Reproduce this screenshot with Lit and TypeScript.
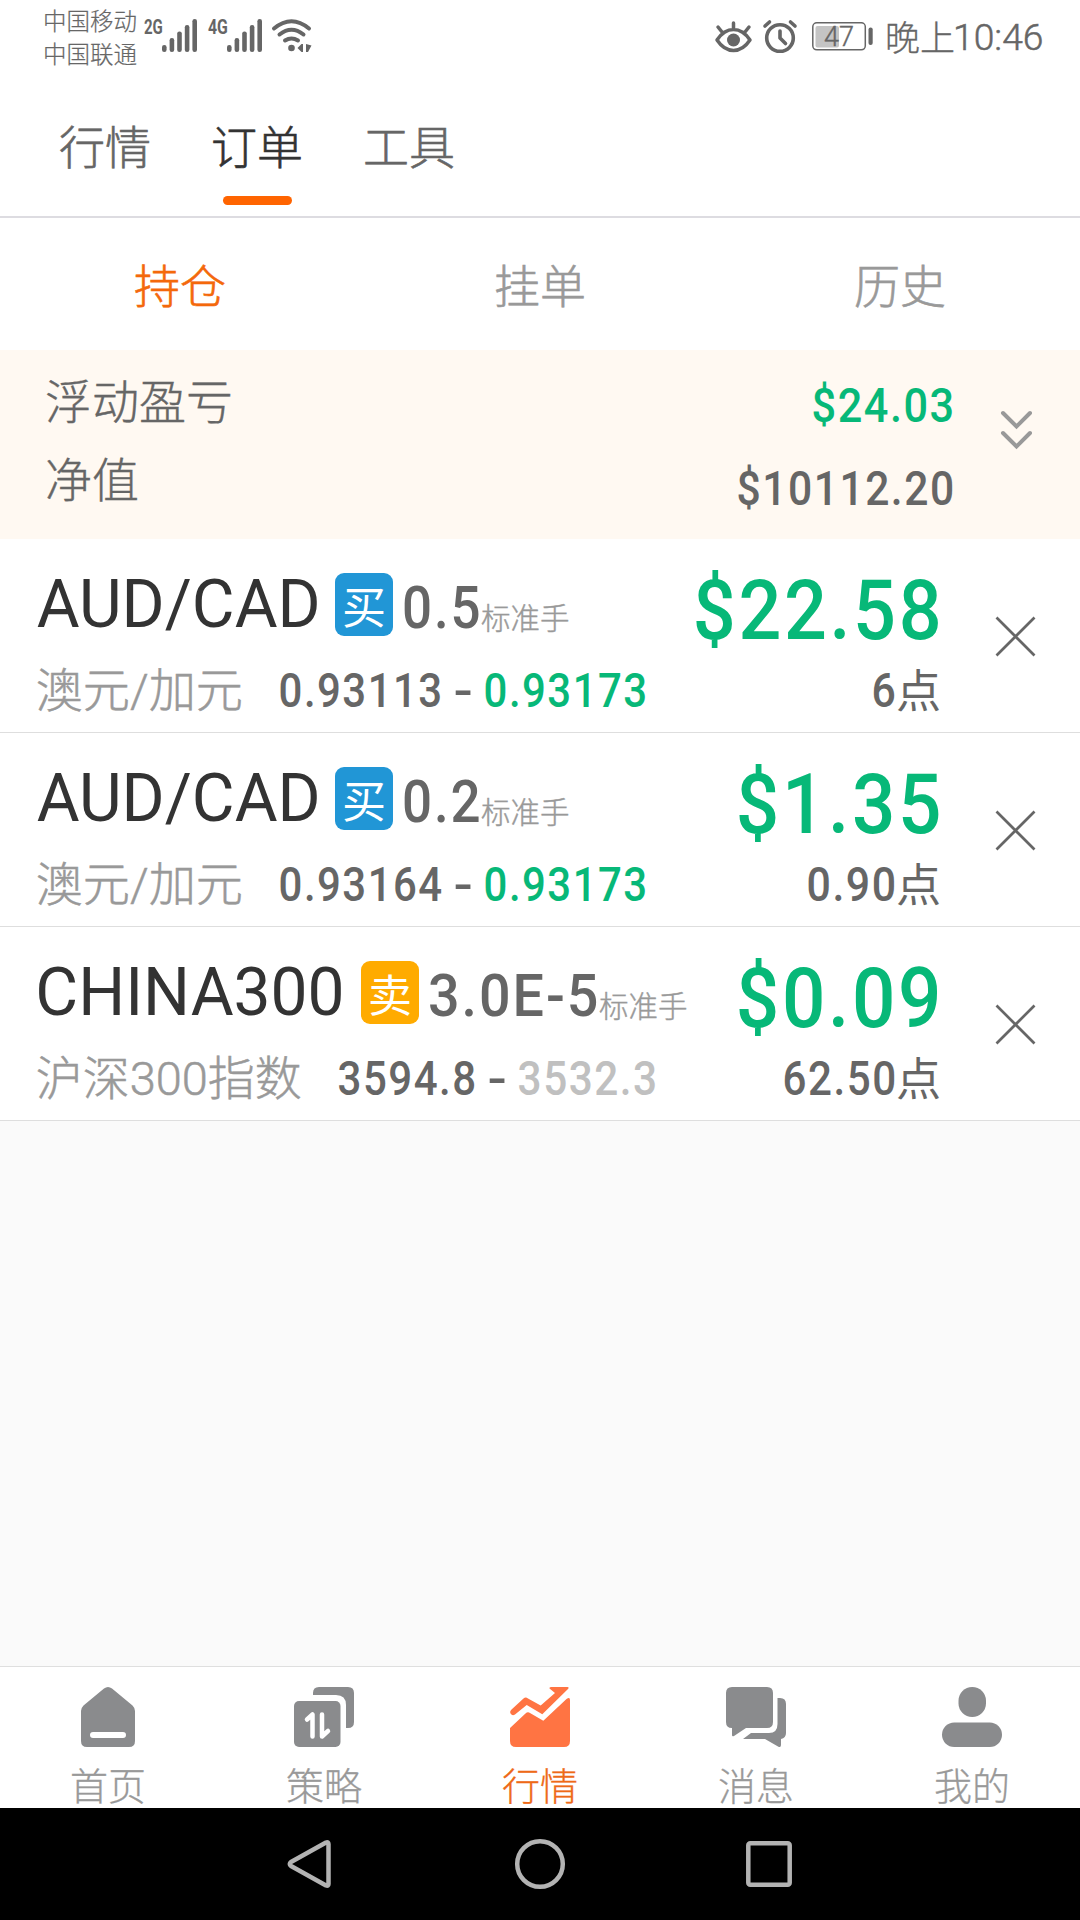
import { LitElement, html, css, svg } from "lit";
import { customElement } from "lit/decorators.js";

/* Condensed numerals: the box is the ink width by the cap height, so rows can align on baselines. */
const fit = (text: string, size: number, width: number, cls: string, left = 0.05) => {
  const cap = Math.round(size * 0.711);
  const condensed = cls.includes("medium") && text.length > 1;
  const tracked = condensed ? 0.035 : 0;
  const k = condensed ? 0.88 : 1;
  return html`<svg class="fit ${cls}" width=${width} height=${cap} viewBox="0 0 ${width} ${cap}">
    <text transform="translate(${-size * left} ${cap}) scale(${k} 1)" font-size=${size} letter-spacing=${size * tracked} textLength=${(width + size * (left + 0.04 + tracked)) / k} lengthAdjust="spacingAndGlyphs">${text}</text>
  </svg>`;
};

interface Order {
  symbol: string; symbolW: number; side: "buy" | "sell"; lots: string; lotsW: number;
  name: string; nameW: number; open: string; openW: number; now: string; nowW: number; nowCls: string;
  profit: string; profitW: number; points: string; pointsW: number;
}

const ORDERS: Order[] = [
  { symbol: "AUD/CAD", symbolW: 280, side: "buy", lots: "0.5", lotsW: 73, name: "澳元/加元", nameW: 203, open: "0.93113", openW: 159, now: "0.93173", nowW: 159, nowCls: "green", profit: "$22.58", profitW: 241, points: "6", pointsW: 20 },
  { symbol: "AUD/CAD", symbolW: 280, side: "buy", lots: "0.2", lotsW: 73, name: "澳元/加元", nameW: 203, open: "0.93164", openW: 159, now: "0.93173", nowW: 159, nowCls: "green", profit: "$1.35", profitW: 198, points: "0.90", pointsW: 85 },
  { symbol: "CHINA300", symbolW: 304, side: "sell", lots: "3.0E-5", lotsW: 165, name: "沪深300指数", nameW: 262, open: "3594.8", openW: 134, now: "3532.3", nowW: 135, nowCls: "pale", profit: "$0.09", profitW: 198, points: "62.50", pointsW: 109 },
];

const signal = svg`
  <rect x="0" y="26" width="4.6" height="7" rx="2.2"/><rect x="7.6" y="19" width="4.6" height="14" rx="2.2"/>
  <rect x="15.2" y="12.4" width="4.6" height="20.6" rx="2.2"/><rect x="22.8" y="6" width="4.6" height="27" rx="2.2"/>
  <rect x="30.4" y="0" width="4.6" height="33" rx="2.2"/>`;

const NAV = [
  { label: "首页", on: false, icon: svg`<path fill-rule="evenodd" d="M26 1.5Q30 -1.5 34 1.5L54.5 18.5Q57 21 57 24V54Q57 60 51 60H9Q3 60 3 54V24Q3 21 5.500 18.500ZM15 45a3 3 0 0 0 0 6H45a3 3 0 0 0 0-6Z"/>` },
  { label: "策略", on: false, icon: svg`<path d="M19 8V6Q19 0 25 0H54Q60 0 60 6V35Q60 41 54 41H52V18Q52 8 42 8Z"/><rect y="14" width="46.500" height="46" rx="5"/><path class="knock" d="M13 32.500L18.500 27.500V49.500M28 27.500V49.500L34 44"/>` },
  { label: "行情", on: true, icon: svg`<path d="M1 23L13.500 11.500Q15.700 9.700 18 11.500L30.700 18.500L45 6L39.500 1.500Q39 0 41 0H57.500Q59.500 .3 58 2L32.300 27.300L16.700 18L5 27.500Q2.500 29 .8 27Q-.8 25 1 23Z"/><path d="M0 41L15.500 26.500Q17.700 24.500 20 26L33.300 33.700L56.500 12Q60 9.500 60 13V54Q60 60 54 60H6Q0 60 0 54Z"/>` },
  { label: "消息", on: false, icon: svg`<path d="M6 0H41Q47 0 47 6V35Q47 41 41 41H20L8 49Q6 50 6 48V41Q0 41 0 35V6Q0 0 6 0Z"/><path d="M51.500 11H54Q60 11 60 17V46Q60 51 55 52V58Q55 61 52 59.500L39 52H17L25 46H43Q51.500 46 51.500 37Z"/>` },
  { label: "我的", on: false, icon: svg`<rect x="16.500" width="27.500" height="30" rx="13.700"/><rect y="35.500" width="60" height="24.500" rx="12.250"/>` },
];

@customElement("app-root")
export class AppRoot extends LitElement {
  static styles = css`
    :host { display: block; font-family: "Noto Sans CJK SC", "Noto Sans CJK TC", sans-serif; font-weight: 300; color: #666; }
    * { box-sizing: border-box; }
    svg { display: block; flex: none; overflow: visible; }
    .fit { font-family: Roboto, "Noto Sans CJK SC", sans-serif; fill: currentColor; }
    .medium { font-weight: 500; }
    .bold { font-weight: 700; }
    .regular { font-weight: 400; }
    .light { font-weight: 300; stroke: currentColor; stroke-width: .5px; }
    .green { color: #07b878; }
    .pale { color: #c0c0c0; }
    .dark { color: #333; }
    .page { display: flex; flex-direction: column; width: 1080px; height: 1920px; background: #fafafa; overflow: hidden; }

    .status { display: flex; height: 74px; background: #fff; padding: 0 38px 0 43px; align-items: flex-start; }
    .carriers { display: flex; flex-direction: column; width: 95px; margin-top: 4px; margin-right: 7px; font-size: 23.5px; line-height: 33px; white-space: nowrap; -webkit-text-stroke: .2px currentColor; }
    .status svg { fill: #666; }
    .gen { margin-top: 19px; }
    .bars { margin-top: 19px; }
    .bars.first { margin-right: 12px; }
    .wifi { margin: 19px 0 0 10px; }
    .spacer { flex: 1; }
    .status .line { fill: none; stroke: #666; stroke-linecap: round; stroke-linejoin: round; }
    .eye { margin-top: 20px; margin-right: 11px; }
    .alarm { margin-top: 20px; margin-right: 15px; }
    .battery { margin-top: 22px; margin-right: 12px; }
    .battery .level { fill: #c4c4c4; }
    .battery .light { stroke: #666; stroke-width: .4px; }
    .clock { display: flex; margin-top: 12px; font-size: 35px; line-height: 48px; -webkit-text-stroke: .3px currentColor; }
    .clock .fit { margin-top: 12px; margin-left: 1px; }

    .tabs { display: flex; height: 144px; background: #fff; border-bottom: 2px solid #dddce1; padding: 0 59px; gap: 60px; font-size: 46px; -webkit-text-stroke: .6px currentColor; }
    .tab { display: flex; flex-direction: column; align-items: center; width: 92px; line-height: 66px; padding-top: 37px; }
    .tab.on { color: #333; }
    .tab.on::after { content: ""; width: 69px; height: 9px; border-radius: 5px; background: #ff6400; margin-top: 19px; }

    .subtabs { display: grid; grid-template-columns: repeat(3, 1fr); height: 132px; background: #fff; font-size: 46px; line-height: 131px; text-align: center; color: #999; -webkit-text-stroke: .6px currentColor; }
    .subtabs .on { color: #f4680b; }

    .summary { display: flex; height: 189px; background: #fff9f2; padding-left: 45px; }
    .labels { display: flex; flex-direction: column; flex: 1; padding-top: 10px; font-size: 47px; line-height: 77.5px; -webkit-text-stroke: .4px currentColor; }
    .values { display: flex; flex-direction: column; align-items: flex-end; gap: 49px; padding-top: 38px; }
    .more { width: 128px; padding: 61px 0 0 49px; }
    .more svg { fill: none; stroke: #999; stroke-width: 4; stroke-linecap: round; }

    .order { display: flex; height: 194px; background: #fff; border-bottom: 1px solid #dedede; padding-left: 38px; }
    .main { display: flex; flex-direction: column; flex: 1; min-width: 0; }
    .head { display: flex; align-items: flex-end; height: 97px; }
    .head .symbol { margin-bottom: 9px; margin-right: 17px; display: flex; }
    .badge { width: 58px; height: 63px; border-radius: 9px; background: #2196d6; color: #fff; font-size: 44px; line-height: 65px; text-align: center; margin-right: 12px; font-weight: 400; flex: none; }
    .badge.sell { background: #ffab00; margin-left: 2px; }
    .lots { margin-bottom: 8px; display: flex; }
    .unit { font-size: 29.5px; line-height: 40px; color: #999; margin-left: 3px; white-space: nowrap; -webkit-text-stroke: .4px currentColor; }
    .quote { display: flex; height: 71px; align-items: flex-end; }
    .name { color: #999; margin-right: 40px; display: flex; }
    .dashbox { margin: 0 15px 0 16px; }
    .gain { display: flex; flex-direction: column; align-items: flex-end; padding-top: 41px; width: 242px; flex: none; }
    .points { display: flex; align-items: flex-end; margin-top: 34px; height: 34px; }
    .points span { font-size: 45px; line-height: 44px; width: 45px; height: 40px; margin-left: 2px; font-weight: 400; margin-right: -3px; }
    .close { width: 142px; padding: 78px 0 0 58px; flex: none; }
    .close svg { stroke: #666; stroke-width: 2.7; }

    .blank { flex: 1; }
    .nav { display: grid; grid-template-columns: repeat(5, 1fr); height: 142px; background: #fff; border-top: 1px solid #dfdfdf; color: #999; font-size: 38px; line-height: 56px; -webkit-text-stroke: .3px currentColor; }
    .item { display: flex; flex-direction: column; align-items: center; padding-top: 20px; gap: 9px; }
    .item svg { fill: #8a8b8d; }
    .item.on { color: #ee6a18; }
    .item.on svg { fill: #ff7443; }
    .item .knock { fill: none; stroke: #fff; stroke-width: 4.5; stroke-linecap: round; stroke-linejoin: round; }
    .system { display: flex; height: 112px; background: #000; justify-content: center; align-items: center; gap: 181px; padding-right: 1px; }
    .system svg { fill: none; stroke: #b3b3b3; stroke-width: 4.5; stroke-linejoin: round; }
    .system .back { margin-right: 3px; }
  `;

  private row(o: Order) {
    return html`<div class="order">
      <div class="main">
        <div class="head">
          <div class="symbol dark">${fit(o.symbol, 66, o.symbolW, "regular", o.side === "buy" ? 0.02 : 0.04)}</div>
          <div class="badge ${o.side}">${o.side === "buy" ? "买" : "卖"}</div>
          <div class="lots">${fit(o.lots, 59, o.lotsW, "medium")}</div>
          <div class="unit">标准手</div>
        </div>
        <div class="quote">
          <div class="name">${fit(o.name, 47, o.nameW, "light")}</div>
          ${fit(o.open, 48, o.openW, "medium")}
          <div class="dashbox">${fit("-", 48, 15, "medium")}</div>
          ${fit(o.now, 48, o.nowW, "medium " + o.nowCls)}
        </div>
      </div>
      <div class="gain">
        ${fit(o.profit, 83, o.profitW, "medium green")}
        <div class="points">${fit(o.points, 48, o.pointsW, "medium")}<span>点</span></div>
      </div>
      <div class="close"><svg width="39" height="39"><path d="M.5 .5L38.500 38.500M38.500 .5L.5 38.500"/></svg></div>
    </div>`;
  }

  render() {
    return html`<div class="page">
      <div class="status">
        <div class="carriers"><span>中国移动</span><span>中国联通</span></div>
        <div class="gen">${fit("2G", 21, 17, "bold")}</div>
        <svg class="bars first" width="35" height="33">${signal}</svg>
        <div class="gen">${fit("4G", 21, 18, "bold")}</div>
        <svg class="bars" width="35" height="33">${signal}</svg>
        <svg class="wifi" width="40" height="33">
          <g class="line" stroke-width="4"><path d="M2 9.500Q19.500 -5 37 9.500"/><path d="M7.500 15.500Q19.500 6 31.500 15.500"/><path d="M13 21.500Q19.500 17.500 26 21.500"/></g>
          <circle cx="19.500" cy="29" r="3.300"/><path d="M31 25V33H29.500L25.500 29L29.500 25ZM34 25L39.500 26.500L36 33H34Z"/>
        </svg>
        <div class="spacer"></div>
        <svg class="eye" width="37" height="33">
          <path class="line" stroke-width="3.500" d="M2 20Q9 9.500 18.500 9.500T35 20Q28 30.500 18.500 30.500T2 20ZM18.500 9V3M7 12L3 7M30 12L34 7"/><circle cx="18.500" cy="20" r="6.500"/>
        </svg>
        <svg class="alarm" width="34" height="33">
          <circle class="line" stroke-width="3.600" cx="17" cy="18" r="13.300"/><path class="line" stroke-width="3.600" d="M17 11V18L22.500 23.500M2 6L6.500 2M32 6L27.500 2"/>
        </svg>
        <svg class="battery" width="61" height="30">
          <rect class="line" x=".8" y=".8" width="52.500" height="27" rx="4" stroke-width="1.500"/><rect class="level" x="3.500" y="4" width="23.500" height="21.500" rx="2"/>
          <rect x="56.500" y="5.500" width="4.200" height="17.500" rx="2"/>
          <text class="fit light" x="12" y="24" font-size="27.500" textLength="30" lengthAdjust="spacingAndGlyphs">47</text>
        </svg>
        <div class="clock"><span>晚上</span>${fit("10:46", 37, 86, "light", 0.08)}</div>
      </div>
      <div class="tabs"><div class="tab">行情</div><div class="tab on">订单</div><div class="tab">工具</div></div>
      <div class="subtabs"><div class="on">持仓</div><div>挂单</div><div>历史</div></div>
      <div class="summary">
        <div class="labels"><span>浮动盈亏</span><span>净值</span></div>
        <div class="values">${fit("$24.03", 48, 138, "medium green")}${fit("$10112.20", 48, 213, "medium")}</div>
        <div class="more"><svg width="31" height="38"><path d="M2 2L15.500 15.500L29 2M2 22L15.500 35.500L29 22"/></svg></div>
      </div>
      ${ORDERS.map((o) => this.row(o))}
      <div class="blank"></div>
      <div class="nav">${NAV.map((n) => html`<div class="item ${n.on ? "on" : ""}"><svg width="60" height="60">${n.icon}</svg><span>${n.label}</span></div>`)}</div>
      <div class="system">
        <svg class="back" width="44" height="50"><path d="M39 3.500Q41.500 2.500 41.500 5V45Q41.500 47.500 39 46.500L4 27Q1.500 25 4 23Z"/></svg>
        <svg width="50" height="50"><circle cx="25" cy="25" r="22.800"/></svg>
        <svg width="46" height="46"><rect x="2.300" y="2.300" width="41.400" height="41.400" rx="2"/></svg>
      </div>
    </div>`;
  }
}
